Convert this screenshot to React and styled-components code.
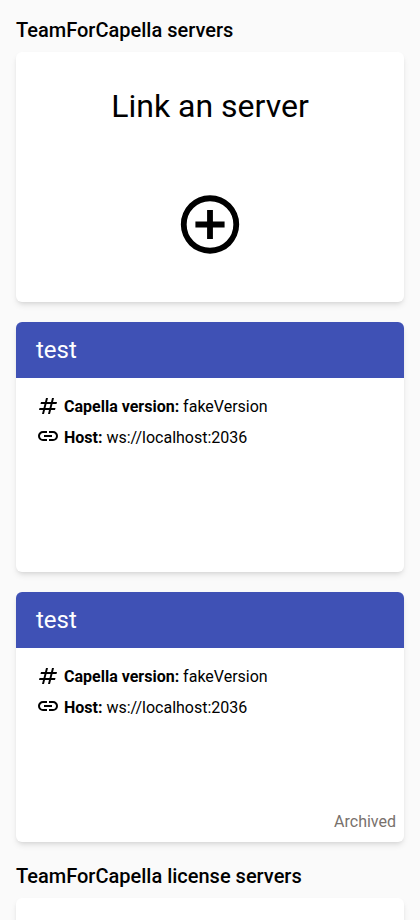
import React from "react";
import styled, { createGlobalStyle } from "styled-components";

const GlobalStyle = createGlobalStyle`
  html, body { margin: 0; height: 920px; overflow: hidden; background: #fafafa; }
  body { font-family: Roboto, "Liberation Sans", sans-serif; color: #000; }
  * { box-sizing: border-box; }
`;

const Page = styled.main`
  height: 920px;
  overflow: hidden;
  padding: 14px 16px 0;
`;

const Heading = styled.h2`
  margin: 0;
  padding-bottom: 6px;
  font-size: 20px;
  font-weight: 500;
  line-height: 32px;
`;

const CardList = styled.div`
  display: flex;
  flex-direction: column;
  gap: 20px;
  padding-bottom: 18px;
`;

const Card = styled.article`
  display: flex;
  flex-direction: column;
  height: 250px;
  overflow: hidden;
  background: #fff;
  border-radius: 6px;
  box-shadow: 0 4px 6px -1px rgba(0, 0, 0, 0.1), 0 2px 4px -2px rgba(0, 0, 0, 0.1);
`;

const AddCard = styled(Card)`
  align-items: center;
`;

const AddTitle = styled.div`
  margin-top: 34px;
  font-size: 32px;
  line-height: 40px;
`;

const AddIcon = styled.svg`
  width: 70px;
  height: 70px;
  margin-top: 64px;
`;

const CardHeader = styled.header`
  height: 56px;
  padding: 0 20px;
  background: #3f51b5;
  color: #fff;
  font-size: 24px;
  line-height: 56px;
`;

const Details = styled.div`
  flex: 1;
  padding: 13px 20px 0;
`;

const DetailRow = styled.div`
  display: flex;
  align-items: center;
  gap: 4px;
  height: 31px;
  font-size: 16px;
  white-space: pre;
`;

const RowIcon = styled.svg`
  width: 24px;
  height: 24px;
  margin-bottom: ${({ $lift }) => $lift}px;
`;

const Status = styled.footer`
  padding: 0 8px 8px;
  text-align: right;
  font-size: 16px;
  line-height: 24px;
  color: #78716c;
`;

const TagIcon = () => (
  <RowIcon $lift={1} viewBox="0 -960 960 960">
    <path d="m240-160 40-160H120l20-80h160l40-160H180l20-80h160l40-160h80l-40 160h160l40-160h80l-40 160h160l-20 80H660l-40 160h160l-20 80H600l-40 160h-80l40-160H360l-40 160h-80Zm140-240h160l40-160H420l-40 160Z" />
  </RowIcon>
);

const LinkIcon = () => (
  <RowIcon $lift={3} viewBox="0 -960 960 960">
    <path d="M440-280H280q-83 0-141.500-58.500T80-480q0-83 58.500-141.500T280-680h160v80H280q-50 0-85 35t-35 85q0 50 35 85t85 35h160v80ZM320-440v-80h320v80H320Zm200 160v-80h160q50 0 85-35t35-85q0-50-35-85t-85-35H520v-80h160q83 0 141.500 58.500T880-480q0 83-58.500 141.500T680-280H520Z" />
  </RowIcon>
);

const ServerCard = ({ name, version, host, archived }) => (
  <Card>
    <CardHeader>{name}</CardHeader>
    <Details>
      <DetailRow>
        <TagIcon />
        <span><b>Capella version:</b> {version}</span>
      </DetailRow>
      <DetailRow>
        <LinkIcon />
        <span><b>Host:</b> {host}</span>
      </DetailRow>
    </Details>
    {archived && <Status>Archived</Status>}
  </Card>
);

const LinkServerCard = () => (
  <AddCard>
    <AddTitle>Link an server</AddTitle>
    <AddIcon viewBox="0 -953 960 960">
      <path d="M440-280h80v-160h160v-80H520v-160h-80v160H280v80h160v160Zm40 200q-83 0-156-31.500T197-197q-54-54-85.500-127T80-480q0-83 31.500-156T197-763q54-54 127-85.500T480-880q83 0 156 31.500T763-763q54 54 85.500 127T880-480q0 83-31.500 156T763-197q-54 54-127 85.500T480-80Zm0-80q134 0 227-93t93-227q0-134-93-227t-227-93q-134 0-227 93t-93 227q0 134 93 227t227 93Z" />
    </AddIcon>
  </AddCard>
);

export default function App() {
  return (
    <>
      <GlobalStyle />
      <Page>
        <Heading>TeamForCapella servers</Heading>
        <CardList>
          <LinkServerCard />
          <ServerCard name="test" version="fakeVersion" host="ws://localhost:2036" />
          <ServerCard name="test" version="fakeVersion" host="ws://localhost:2036" archived />
        </CardList>
        <Heading>TeamForCapella license servers</Heading>
        <CardList>
          <AddCard />
        </CardList>
      </Page>
    </>
  );
}
